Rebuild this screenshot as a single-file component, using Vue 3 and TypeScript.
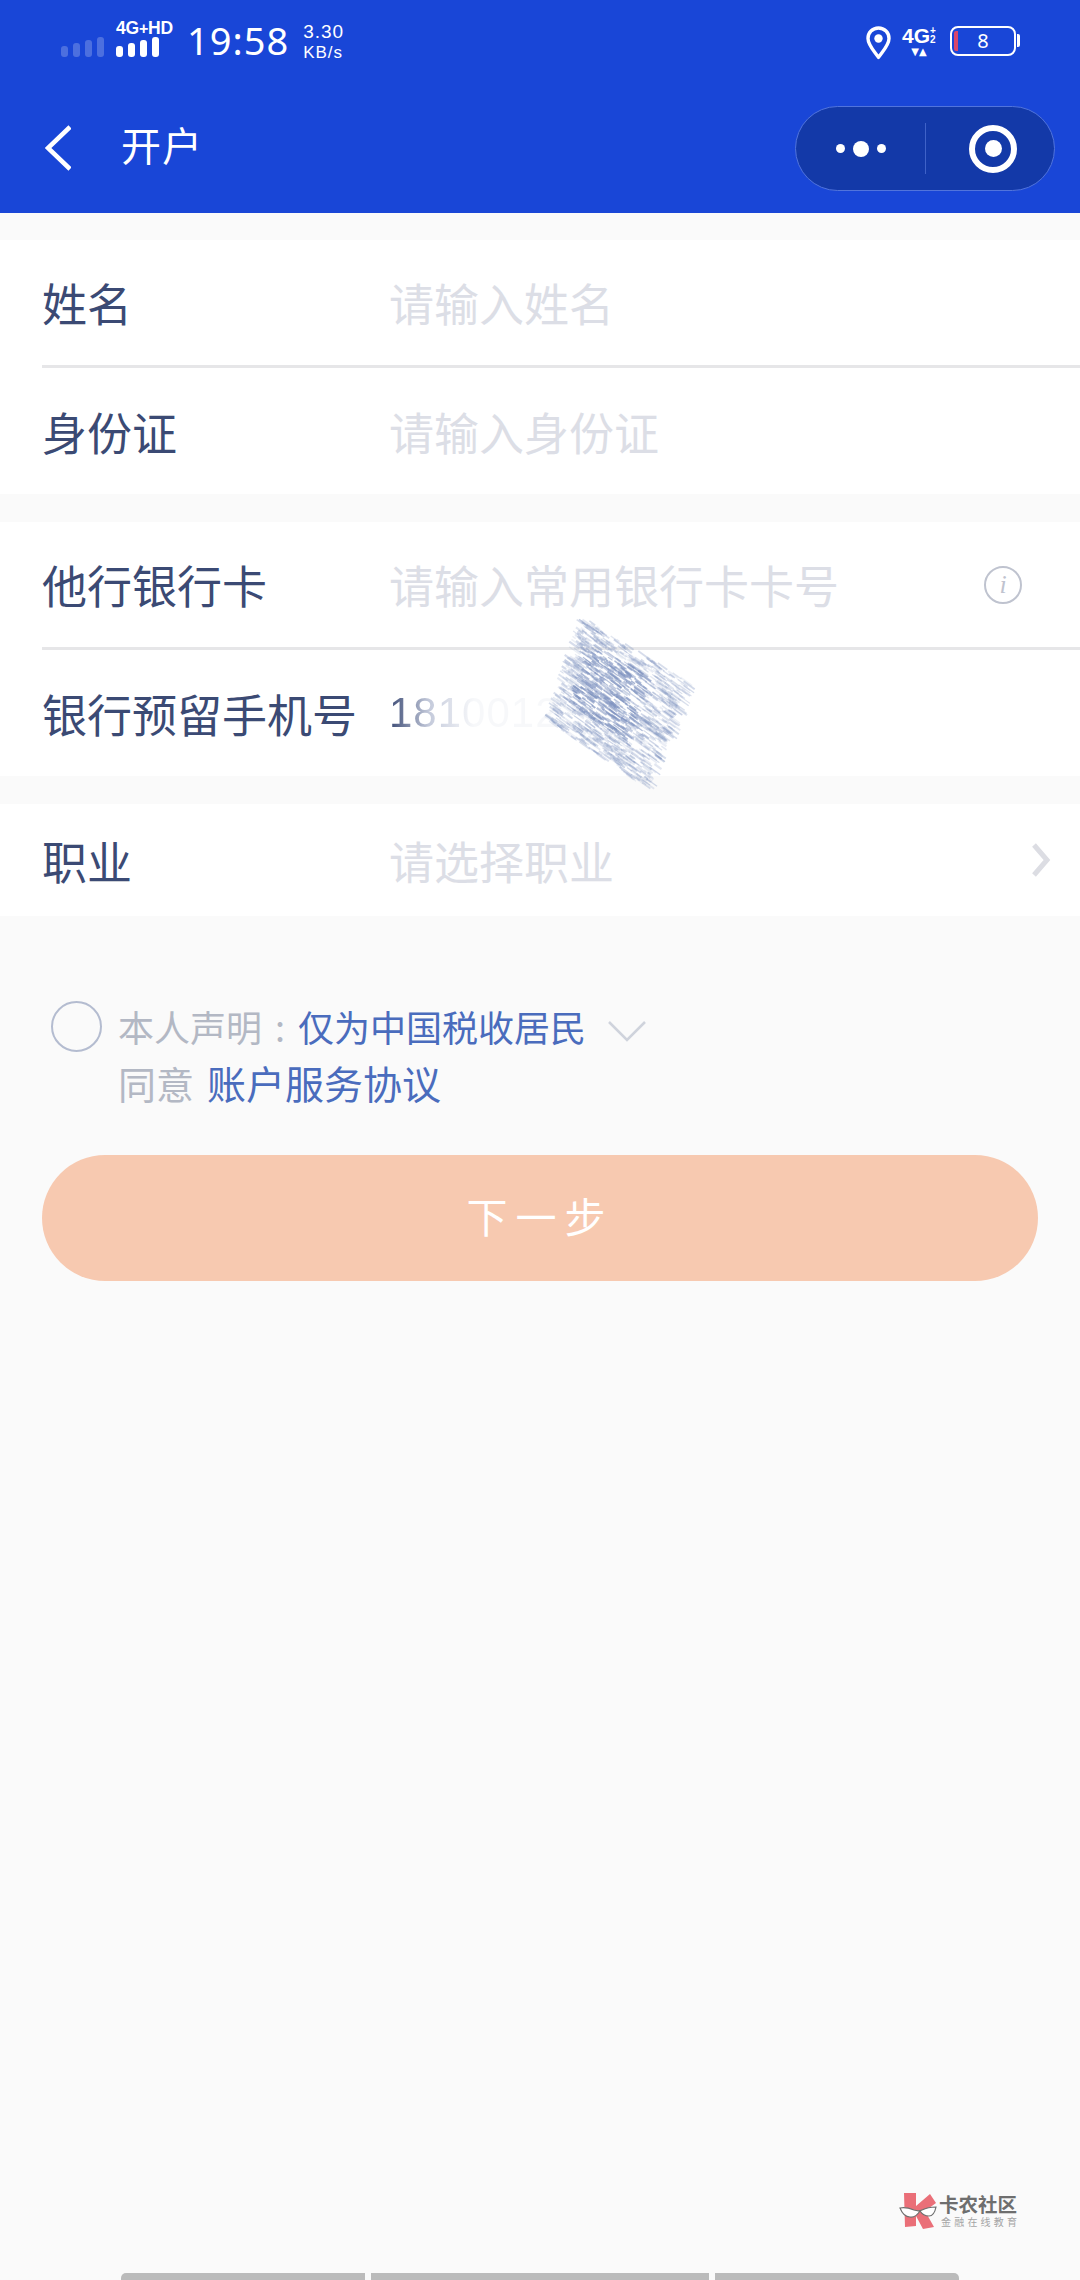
<script setup lang="ts">
type Row = { label: string; hint?: string; value?: string; info?: boolean; arrow?: boolean };

const groups: Row[][] = [
  [
    { label: "姓名", hint: "请输入姓名" },
    { label: "身份证", hint: "请输入身份证" },
  ],
  [
    { label: "他行银行卡", hint: "请输入常用银行卡卡号", info: true },
    { label: "银行预留手机号", value: "1810012" },
  ],
  [{ label: "职业", hint: "请选择职业", arrow: true }],
];

// pencil scribble that hides the phone number
let seed = 41;
const rnd = () => {
  seed = (seed * 16807) % 2147483647;
  return seed / 2147483647;
};
const strokes = Array.from({ length: 1200 }, () => {
  const u = rnd();
  const v = rnd();
  // corners of the scribbled patch, relative to the svg box
  const x = (1 - v) * ((1 - u) * 50 + u * 158) + v * ((1 - u) * 16 + u * 118);
  const y = (1 - v) * ((1 - u) * 2 + u * 68) + v * ((1 - u) * 106 + u * 176);
  const len = 3 + rnd() * 9;
  const dark = Math.abs(v - 0.45) < 0.3 && Math.abs(u - 0.42) < 0.28;
  return {
    x1: x,
    y1: y,
    x2: x + len,
    y2: y + len * 0.72,
    op: (dark ? 0.36 : 0.12) + rnd() * 0.25,
    w: 1 + rnd() * 1.2,
  };
});
</script>

<template>
  <div class="page">
    <header class="head">
      <div class="status">
        <div class="status-left">
          <div class="bars faint"><i></i><i></i><i></i><i></i></div>
          <div class="sim">
            <span class="net">4G<b>+</b>HD</span>
            <div class="bars"><i></i><i></i><i></i><i></i></div>
          </div>
          <span class="time">19:58</span>
          <div class="speed">
            <span>3.30</span>
            <small>KB/s</small>
          </div>
        </div>
        <div class="status-right">
          <svg class="pin" width="25" height="34" viewBox="0 0 25 34">
            <path
              d="M12.5 2C6.4 2 2 6.7 2 12.4c0 6.6 6.2 12.6 10.500 19 4.300-6.400 10.500-12.400 10.500-19C23 6.700 18.600 2 12.500 2z"
              fill="none"
              stroke="#fff"
              stroke-width="3.400"
              stroke-linejoin="round"
            />
            <circle cx="12.500" cy="12.500" r="4.200" fill="#fff" />
          </svg>
          <div class="net2">
            <div class="net2-top">
              <span>4G</span>
              <div class="frac"><em>+</em><em>2</em></div>
            </div>
            <span class="tri">▼▲</span>
          </div>
          <div class="battery">
            <i class="low"></i>
            <span>8</span>
          </div>
          <i class="nub"></i>
        </div>
      </div>
      <div class="nav">
        <svg class="back" width="26" height="48" viewBox="0 0 26 48">
          <path d="M25 3 3 24l22 21" fill="none" stroke="#fff" stroke-width="4.500" />
        </svg>
        <span class="title">开户</span>
        <div class="capsule">
          <div class="dots"><i></i><i class="big"></i><i></i></div>
          <i class="divider"></i>
          <div class="target"><i></i></div>
        </div>
      </div>
    </header>

    <main class="body">
      <section v-for="(group, g) in groups" :key="g" class="group">
        <div v-for="row in group" :key="row.label" class="row">
          <span class="label">{{ row.label }}</span>
          <span v-if="row.hint" class="hint">{{ row.hint }}</span>
          <span v-if="row.value" class="value">{{ row.value }}</span>
          <span v-if="row.info" class="info">i</span>
          <svg v-if="row.arrow" class="arrow" width="22" height="36" viewBox="0 0 22 36">
            <path d="M4 3l13 15L4 33" fill="none" stroke="#dcdde3" stroke-width="5" />
          </svg>
        </div>
      </section>

      <div class="agree">
        <span class="check"></span>
        <div class="agree-text">
          <p class="line-one">
            <span class="grey">本人声明<span class="colon">:</span></span><span class="blue">仅为中国税收居民</span>
            <svg width="38" height="22" viewBox="0 0 38 22">
              <path d="M1 2l18 18L37 2" fill="none" stroke="#cfd3dc" stroke-width="2.500" />
            </svg>
          </p>
          <p class="line-two"><span class="grey">同意</span><span class="blue">账户服务协议</span></p>
        </div>
      </div>

      <button class="next">下一步</button>
    </main>

    <svg class="scribble" width="190" height="190" viewBox="0 0 190 190">
      <line
        v-for="(s, i) in strokes"
        :key="i"
        :x1="s.x1"
        :y1="s.y1"
        :x2="s.x2"
        :y2="s.y2"
        stroke="#7f93c0"
        :stroke-width="s.w"
        :stroke-opacity="s.op"
      />
    </svg>

    <div class="mark">
      <svg width="38" height="36" viewBox="0 0 38 36">
        <path d="M5 0h12v13L31 1l6 9-11 8 9 16-11 2-7-13v10L6 34z" fill="#ea6f78" />
        <path
          d="M1 15c4-1 9 0 14 2 3 1 6 1 8 0 4-2 9-3 14-3-1 5-3 9-7 9s-7-2-9-5c-2 3-5 7-10 6-5 0-8-4-10-9z"
          fill="#fff"
          stroke="#6f6f6f"
          stroke-width="1.200"
        />
      </svg>
      <div class="mark-text">
        <b>卡农社区</b>
        <small>金融在线教育</small>
      </div>
    </div>

    <div class="gesture"><i></i><i></i><i></i></div>
  </div>
</template>

<style scoped>
.page {
  position: relative;
  width: 1080px;
  height: 2280px;
  overflow: hidden;
  display: flex;
  flex-direction: column;
  background-color: #fafafa;
  font-family: "Noto Sans CJK SC", "Noto Sans", sans-serif;
}

.head {
  height: 213px;
  flex-shrink: 0;
  background-color: #1946d7;
  color: #fff;
}

.status {
  height: 80px;
  display: flex;
  justify-content: space-between;
}

.status-left {
  display: flex;
  padding: 22px 0 0 61px;
  align-items: flex-start;
}

.bars {
  display: flex;
  align-items: flex-end;
  gap: 5px;
  height: 20px;
}

.bars i {
  width: 7px;
  border-radius: 3px;
  background-color: #fff;
  height: 11px;
}

.bars i:nth-child(2) {
  height: 14px;
}

.bars i:nth-child(3) {
  height: 17px;
}

.bars i:nth-child(4) {
  height: 20px;
}

.bars.faint {
  margin: 15px 12px 0 0;
  opacity: 0.22;
}

.sim {
  width: 58px;
  display: flex;
  flex-direction: column;
}

.net {
  height: 15px;
  margin-top: -1px;
  padding-bottom: 1px;
  font: 700 17.500px/15px "Liberation Sans", sans-serif;
  white-space: nowrap;
  letter-spacing: -0.2px;
}

.net b {
  font-size: 16px;
}

.time {
  margin: -1px 0 0 13px;
  font: 400 38px/38px "Noto Sans", sans-serif;
  letter-spacing: 1px;
}

.speed {
  margin: 0 0 0 14px;
  display: flex;
  flex-direction: column;
  font-family: "Liberation Sans", sans-serif;
}

.speed span {
  font-size: 19px;
  line-height: 20px;
  letter-spacing: 1px;
}

.speed small {
  font-size: 17px;
  line-height: 22px;
  letter-spacing: 1px;
}

.status-right {
  display: flex;
  align-items: flex-start;
  padding: 26px 60px 0 0;
}

.net2 {
  margin-left: 10px;
  width: 36px;
  display: flex;
  flex-direction: column;
  align-items: center;
}

.net2-top {
  display: flex;
  font: 700 21px/20px "Liberation Sans Narrow", "Liberation Sans", sans-serif;
}

.frac {
  display: flex;
  flex-direction: column;
  font-size: 10px;
  line-height: 9px;
}

.frac em {
  font-style: normal;
}

.tri {
  font-size: 10px;
  line-height: 12px;
  font-family: "DejaVu Sans", sans-serif;
}

.battery {
  position: relative;
  margin-left: 13px;
  width: 66px;
  height: 30px;
  box-sizing: border-box;
  border: 2.500px solid #fff;
  border-radius: 8px;
  text-align: center;
  font: 400 20px/25px "Noto Sans", sans-serif;
}

.low {
  position: absolute;
  left: 2px;
  top: 3px;
  bottom: 3px;
  width: 4px;
  background-color: #d9466a;
  border-radius: 2px 0 0 2px;
}

.nub {
  margin: 8px 0 0 1px;
  width: 3px;
  height: 13px;
  background-color: #fff;
  border-radius: 0 2px 2px 0;
}

.nav {
  height: 133px;
  display: flex;
  align-items: center;
  padding-left: 45px;
}

.back {
  position: relative;
  top: 1px;
}

.title {
  margin: 0 0 6px 50px;
  font-size: 40px;
  line-height: 40px;
  letter-spacing: 1px;
}

.capsule {
  margin-left: auto;
  margin-right: 25px;
  margin-top: 4px;
  width: 260px;
  height: 85px;
  box-sizing: border-box;
  display: flex;
  align-items: center;
  background-color: #1339a8;
  border: 1.500px solid #5174dc;
  border-radius: 43px;
}

.dots {
  width: 129px;
  display: flex;
  align-items: center;
  justify-content: center;
  gap: 8px;
}

.dots i {
  width: 9px;
  height: 9px;
  border-radius: 50%;
  background-color: #fff;
}

.dots i.big {
  width: 16px;
  height: 16px;
}

.divider {
  width: 1px;
  height: 51px;
  background-color: #3f62c8;
}

.target {
  margin-left: 43px;
  width: 48px;
  height: 48px;
  box-sizing: border-box;
  border: 6px solid #fff;
  border-radius: 50%;
  display: flex;
  align-items: center;
  justify-content: center;
}

.target i {
  width: 17px;
  height: 17px;
  border-radius: 50%;
  background-color: #fff;
}

.body {
  flex: 1;
  padding-top: 27px;
  display: flex;
  flex-direction: column;
  gap: 28px;
}

.group {
  background-color: #fff;
}

.row {
  height: 128px;
  margin-left: 42px;
  box-sizing: border-box;
  display: flex;
  align-items: center;
  border-bottom: 3px solid #e6e6e8;
}

.row:last-child {
  height: 126px;
  border-bottom: none;
}

.group:last-of-type .row {
  height: 112px;
}

.label {
  width: 347px;
  flex-shrink: 0;
  font-size: 45px;
  color: #3b4a74;
  white-space: nowrap;
}

.hint {
  font-size: 45px;
  color: #dcdee6;
}

.value {
  font: 400 42px "Liberation Sans", sans-serif;
  letter-spacing: 1px;
  background: linear-gradient(90deg, #3b4a74 0, #c4cadb 40px, #f7f8fa 85px);
  -webkit-background-clip: text;
  background-clip: text;
  color: transparent;
}

.info {
  margin-left: auto;
  margin-right: 58px;
  width: 38px;
  height: 38px;
  box-sizing: border-box;
  border: 2px solid #bfc3cf;
  border-radius: 50%;
  text-align: center;
  font: italic 400 26px/34px "Liberation Serif", serif;
  color: #bfc3cf;
}

.arrow {
  margin-left: auto;
  margin-right: 28px;
}

.agree {
  margin: 57px 0 0 51px;
  display: flex;
}

.check {
  width: 51px;
  height: 51px;
  box-sizing: border-box;
  flex-shrink: 0;
  border: 2.500px solid #b4bcd0;
  border-radius: 50%;
}

.agree-text {
  margin: -3px 0 0 16px;
  font-size: 36px;
  line-height: 56px;
}

.agree-text p {
  margin: 0;
  white-space: nowrap;
}

.colon {
  display: inline-block;
  width: 36px;
  text-align: center;
}

.line-one svg {
  margin-left: 22px;
}

.line-two {
  margin-left: 4px;
  font-size: 38px;
}

.line-two .blue {
  margin-left: 13px;
  font-size: 39px;
}

.grey {
  color: #b3b8c4;
}

.blue {
  color: #4a6cbd;
}

.next {
  margin: 16px 42px 0;
  height: 126px;
  padding-bottom: 8px;
  border: none;
  border-radius: 63px;
  background-color: #f7c9b0;
  color: #fff;
  font-family: inherit;
  font-size: 41px;
  letter-spacing: 8px;
}

.scribble {
  position: absolute;
  left: 528px;
  top: 612px;
}

.mark {
  position: absolute;
  left: 899px;
  top: 2193px;
  display: flex;
  gap: 2px;
}

.mark-text {
  display: flex;
  flex-direction: column;
}

.mark-text b {
  font-size: 19.500px;
  line-height: 22px;
  font-weight: 700;
  color: #6e6e6e;
  white-space: nowrap;
}

.mark-text small {
  margin: 1px 0 0 2px;
  font-size: 10px;
  line-height: 12px;
  letter-spacing: 3.200px;
  color: #a5a5a5;
  white-space: nowrap;
}

.gesture {
  position: absolute;
  left: 121px;
  bottom: 0;
  display: flex;
  gap: 6px;
}

.gesture i {
  height: 7px;
  width: 244px;
  background-color: #bbb;
}

.gesture i:nth-child(1) {
  border-top-left-radius: 5px;
}

.gesture i:nth-child(2) {
  width: 338px;
}

.gesture i:nth-child(3) {
  border-top-right-radius: 5px;
}
</style>
